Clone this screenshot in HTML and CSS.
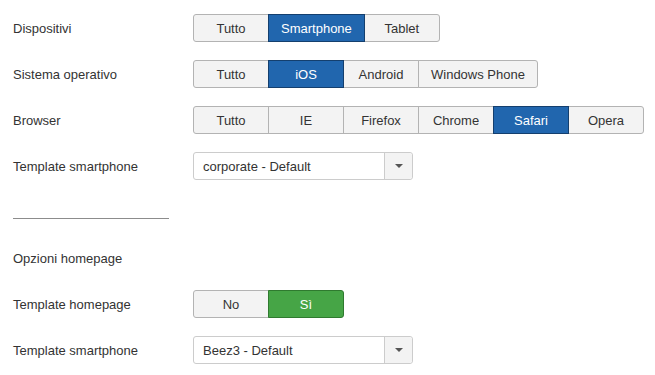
FILE: index.html
```html
<!DOCTYPE html>
<html lang="it">
<head>
<meta charset="utf-8">
<title>Opzioni</title>
<link rel="stylesheet" href="styles.css">
</head>
<body>
<div class="form">
  <div class="row">
    <div class="label">Dispositivi</div>
    <div class="btn-group">
      <span class="btn">Tutto</span>
      <span class="btn active-blue">Smartphone</span>
      <span class="btn">Tablet</span>
    </div>
  </div>
  <div class="row">
    <div class="label">Sistema operativo</div>
    <div class="btn-group">
      <span class="btn">Tutto</span>
      <span class="btn active-blue">iOS</span>
      <span class="btn">Android</span>
      <span class="btn">Windows Phone</span>
    </div>
  </div>
  <div class="row">
    <div class="label">Browser</div>
    <div class="btn-group">
      <span class="btn">Tutto</span>
      <span class="btn">IE</span>
      <span class="btn">Firefox</span>
      <span class="btn">Chrome</span>
      <span class="btn active-blue">Safari</span>
      <span class="btn">Opera</span>
    </div>
  </div>
  <div class="row">
    <div class="label">Template smartphone</div>
    <div class="select">
      <span class="select-text">corporate - Default</span>
      <span class="select-caret"><span class="caret"></span></span>
    </div>
  </div>
  <div class="row spacer">
    <hr class="rule">
  </div>
  <div class="row">
    <div class="label">Opzioni homepage</div>
  </div>
  <div class="row">
    <div class="label">Template homepage</div>
    <div class="btn-group">
      <span class="btn">No</span>
      <span class="btn active-green">Sì</span>
    </div>
  </div>
  <div class="row">
    <div class="label">Template smartphone</div>
    <div class="select">
      <span class="select-text">Beez3 - Default</span>
      <span class="select-caret"><span class="caret"></span></span>
    </div>
  </div>
</div>
</body>
</html>
```

FILE: styles.css
```css
html, body {
  margin: 0;
  padding: 0;
  background: #ffffff;
}

body {
  font-family: "Liberation Sans", Arial, Helvetica, sans-serif;
  font-size: 13px;
  color: #333333;
}

.form {
  display: flex;
  flex-direction: column;
  gap: 18px;
  padding: 14px 0 0 13px;
}

.row {
  display: flex;
  align-items: center;
  height: 28px;
}

.label {
  width: 180px;
  flex: none;
  line-height: 18px;
  padding-top: 2px;
}

.btn-group {
  display: flex;
}

.btn {
  box-sizing: border-box;
  min-width: 76px;
  height: 28px;
  padding: 1px 12px 0;
  line-height: 25px;
  text-align: center;
  background: #f3f3f3;
  border: 1px solid #b3b3b3;
  color: #333333;
  position: relative;
}

.btn + .btn {
  margin-left: -1px;
}

.btn:first-child {
  border-radius: 3px 0 0 3px;
}

.btn:last-child {
  border-radius: 0 3px 3px 0;
}

.active-blue {
  background: #2166ae;
  border-color: #143f6e;
  color: #ffffff;
  z-index: 1;
}

.active-green {
  background: #46a546;
  border-color: #2f7a2f;
  color: #ffffff;
  z-index: 1;
}

.select {
  box-sizing: border-box;
  width: 220px;
  height: 28px;
  display: flex;
  border: 1px solid #cccccc;
  border-radius: 3px;
  background: #ffffff;
}

.select-text {
  flex: 1;
  padding: 1px 0 0 9px;
  line-height: 25px;
  color: #333333;
}

.select-caret {
  width: 27px;
  border-left: 1px solid #cccccc;
  background: #f3f3f3;
  border-radius: 0 3px 3px 0;
  display: flex;
  align-items: center;
  justify-content: center;
}

.caret {
  width: 0;
  height: 0;
  border-left: 4px solid transparent;
  border-right: 4px solid transparent;
  border-top: 4px solid #555555;
}

.spacer {
  align-items: flex-start;
}

.rule {
  box-sizing: border-box;
  width: 156px;
  margin: 20px 0 0 0;
  border: 0;
  border-top: 1px solid #8c8c8c;
  height: 0;
}
```
